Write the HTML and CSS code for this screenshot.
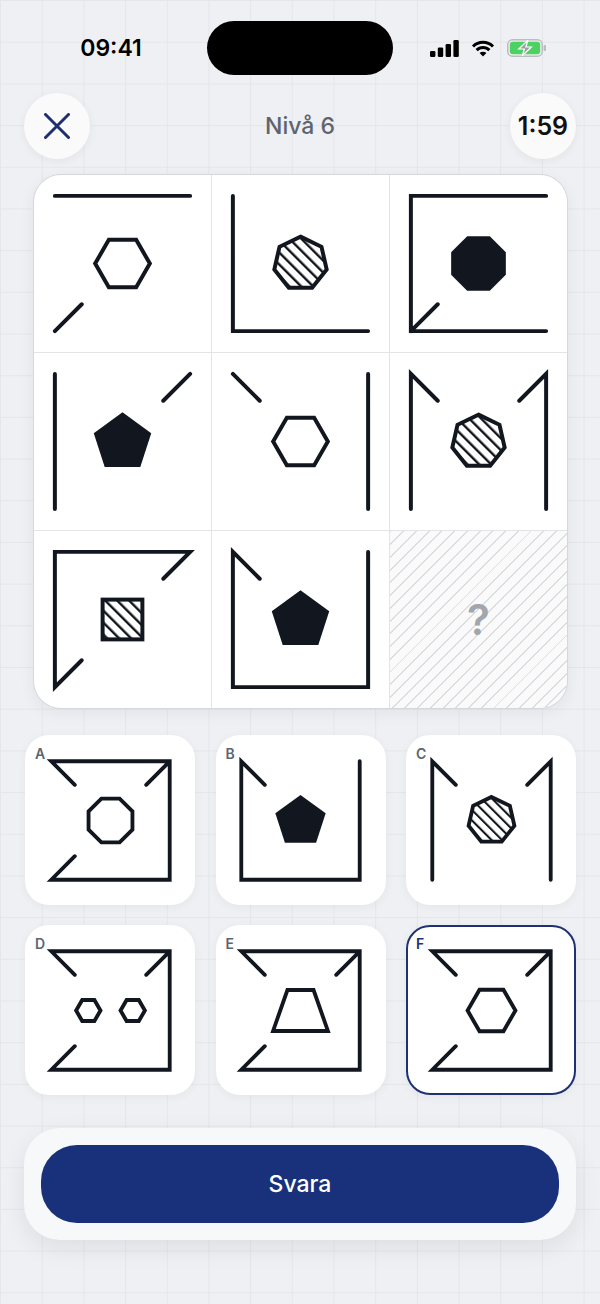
FILE: index.html
```html
<!DOCTYPE html>
<html lang="sv">
<head>
    <meta charset="UTF-8">
    <meta name="viewport" content="width=device-width, initial-scale=1.0">
    <title>Nivå 6</title>
    <link rel="stylesheet" href="styles.css">
</head>
<body>

    <svg class="defs" width="0" height="0">
        <defs>
            <pattern id="hatch" patternUnits="userSpaceOnUse" width="8.5" height="8.5" patternTransform="rotate(-45)">
                <rect x="0" y="0" width="2.4" height="8.5" fill="#12171f"/>
            </pattern>
        </defs>
    </svg>

    <div class="screen">

        <div class="status-bar">
            <div class="clock">09:41</div>
            <div class="island"></div>
            <div class="status-icons">
                <svg width="29" height="17" viewBox="0 0 29 17">
                    <rect x="0" y="11" width="5.4" height="6" rx="1.3" fill="#000"/>
                    <rect x="7.8" y="7.5" width="5.4" height="9.5" rx="1.3" fill="#000"/>
                    <rect x="15.6" y="4" width="5.4" height="13" rx="1.3" fill="#000"/>
                    <rect x="23.4" y="0" width="5.4" height="17" rx="1.3" fill="#000"/>
                </svg>
                <svg width="24" height="17" viewBox="0 0 24 17">
                    <path d="M12 16.5 L8.6 13.1 A4.8 4.8 0 0 1 15.4 13.1 Z" fill="#000"/>
                    <path d="M5.6 10.1 A9 9 0 0 1 18.4 10.1" fill="none" stroke="#000" stroke-width="3"/>
                    <path d="M2 6.5 A14 14 0 0 1 22 6.5" fill="none" stroke="#000" stroke-width="3"/>
                </svg>
                <svg width="40" height="18" viewBox="0 0 40 18">
                    <rect x="0.75" y="0.75" width="34.5" height="16.5" rx="4.8" fill="none" stroke="#b9bcc1" stroke-width="1.5"/>
                    <rect x="2.8" y="2.8" width="30.4" height="12.4" rx="3" fill="#4cd263"/>
                    <rect x="36.6" y="6" width="2.4" height="6" rx="1.1" fill="#b9bcc1"/>
                    <polygon points="21,1.2 11.8,10 17.4,10 15.2,16.8 24.4,8 18.8,8" fill="#9a9ea3" stroke="#fff" stroke-width="1.2"/>
                </svg>
            </div>
        </div>

        <header class="top-bar">
            <button class="round-btn close-btn" aria-label="Stäng">
                <svg width="26" height="26" viewBox="0 0 26 26">
                    <path d="M1.5 1.5 L24.5 24.5 M24.5 1.5 L1.5 24.5" stroke="#1e2f6f" stroke-width="3" stroke-linecap="round"/>
                </svg>
            </button>
            <h1 class="level-title">Nivå 6</h1>
            <div class="round-btn timer">1:59</div>
        </header>

        <!-- 3x3 matrix -->
        <div class="puzzle">
            <div class="cell">
                <svg viewBox="0 0 178 178">
                    <path d="M21 21H157 M21 157L48 130"/>
                    <polygon points="116.5,89 102.75,112.8 75.25,112.8 61.5,89 75.25,65.2 102.75,65.2"/>
                </svg>
            </div>
            <div class="cell">
                <svg viewBox="0 0 178 178">
                    <path d="M21 21V157H157"/>
                    <polygon class="hatched" points="89,62 110.11,72.17 115.32,95.01 100.72,113.33 77.28,113.33 62.68,95.01 67.89,72.17"/>
                </svg>
            </div>
            <div class="cell">
                <svg viewBox="0 0 178 178">
                    <path d="M157 21H21V157H157 M21 157L48 130"/>
                    <polygon class="solid" points="116.5,77.6 116.5,100.4 100.4,116.5 77.6,116.5 61.5,100.4 61.5,77.6 77.6,61.5 100.4,61.5"/>
                </svg>
            </div>

            <div class="cell">
                <svg viewBox="0 0 178 178">
                    <path d="M21 21V157 M157 21L130 48"/>
                    <polygon class="solid" points="89,59.6 117.9,80.6 106.9,114.6 71.1,114.6 60.1,80.6"/>
                </svg>
            </div>
            <div class="cell">
                <svg viewBox="0 0 178 178">
                    <path d="M21 21L48 48 M157 21V157"/>
                    <polygon points="116.5,89 102.75,112.8 75.25,112.8 61.5,89 75.25,65.2 102.75,65.2"/>
                </svg>
            </div>
            <div class="cell">
                <svg viewBox="0 0 178 178">
                    <path d="M48 48L21 21V157 M130 48L157 21V157"/>
                    <polygon class="hatched" points="89,62 110.11,72.17 115.32,95.01 100.72,113.33 77.28,113.33 62.68,95.01 67.89,72.17"/>
                </svg>
            </div>

            <div class="cell">
                <svg viewBox="0 0 178 178">
                    <path d="M130 48L157 21H21V157L48 130"/>
                    <rect class="hatched" x="69" y="69" width="40" height="40"/>
                </svg>
            </div>
            <div class="cell">
                <svg viewBox="0 0 178 178">
                    <path d="M48 48L21 21V157H157V21"/>
                    <polygon class="solid" points="89,59.6 117.9,80.6 106.9,114.6 71.1,114.6 60.1,80.6"/>
                </svg>
            </div>
            <div class="cell cell-missing">
                <span>?</span>
            </div>
        </div>

        <!-- answer options -->
        <div class="options">
            <div class="option">
                <span class="option-label">A</span>
                <svg viewBox="0 0 178 178">
                    <path d="M48 48L21 21H157V157H21L48 130 M130 48L157 21"/>
                    <polygon points="114.2,78.55 114.2,99.45 99.45,114.2 78.55,114.2 63.8,99.45 63.8,78.55 78.55,63.8 99.45,63.8"/>
                </svg>
            </div>
            <div class="option">
                <span class="option-label">B</span>
                <svg viewBox="0 0 178 178">
                    <path d="M48 48L21 21V157H157V21"/>
                    <polygon class="solid" points="89,59.6 117.9,80.6 106.9,114.6 71.1,114.6 60.1,80.6"/>
                </svg>
            </div>
            <div class="option">
                <span class="option-label">C</span>
                <svg viewBox="0 0 178 178">
                    <path d="M48 48L21 21V157 M130 48L157 21V157"/>
                    <polygon class="hatched" points="89,62 110.11,72.17 115.32,95.01 100.72,113.33 77.28,113.33 62.68,95.01 67.89,72.17"/>
                </svg>
            </div>
            <div class="option">
                <span class="option-label">D</span>
                <svg viewBox="0 0 178 178">
                    <path d="M48 48L21 21H157V157H21L48 130 M130 48L157 21"/>
                    <polygon points="77.5,89 70.5,101.1 56.5,101.1 49.5,89 56.5,76.9 70.5,76.9"/>
                    <polygon points="128.5,89 121.5,101.1 107.5,101.1 100.5,89 107.5,76.9 121.5,76.9"/>
                </svg>
            </div>
            <div class="option">
                <span class="option-label">E</span>
                <svg viewBox="0 0 178 178">
                    <path d="M48 48L21 21H157V157H21L48 130 M130 48L157 21"/>
                    <polygon points="74,65.5 104,65.5 120.5,112.5 57.5,112.5"/>
                </svg>
            </div>
            <div class="option selected">
                <span class="option-label">F</span>
                <svg viewBox="0 0 178 178">
                    <path d="M48 48L21 21H157V157H21L48 130 M130 48L157 21"/>
                    <polygon points="116.5,89 102.75,112.8 75.25,112.8 61.5,89 75.25,65.2 102.75,65.2"/>
                </svg>
            </div>
        </div>

        <div class="answer-bar">
            <button class="btn-answer">Svara</button>
        </div>

    </div>

</body>
</html>
```

FILE: styles.css
```css
body {
    margin: 0;
    width: 600px;
    height: 1304px;
    font-family: Inter, "Noto Sans", sans-serif;
    color: #111;
    background-color: #eff0f3;
    background-image:
        linear-gradient(#e4e6ea 1px, transparent 1px),
        linear-gradient(90deg, #e4e6ea 1px, transparent 1px);
    background-size: 41.7px 41.7px;
    overflow: hidden;
}
.defs {
    display: block;
    width: 0;
    height: 0;
}
.screen {
    display: flex;
    flex-direction: column;
}

/* status bar */
.status-bar {
    display: grid;
    grid-template-columns: 1fr 186px 1fr;
    align-items: center;
    padding-top: 21px;
    height: 54px;
}
.clock {
    text-align: center;
    padding-left: 15px;
    font-size: 23px;
    font-weight: 600;
    color: #000;
}
.island {
    height: 54px;
    background: #000;
    border-radius: 27px;
}
.status-icons {
    display: flex;
    justify-content: center;
    align-items: center;
    gap: 12px;
    padding-right: 16px;
}
.status-icons svg {
    display: block;
}

/* header */
.top-bar {
    display: flex;
    align-items: center;
    justify-content: space-between;
    padding: 0 24px;
    margin-top: 18px;
    height: 66px;
}
.round-btn {
    width: 66px;
    height: 66px;
    border-radius: 50%;
    border: none;
    padding: 0;
    background: #fafafb;
    box-shadow: 0 2px 10px rgba(30, 40, 60, 0.06);
    display: flex;
    align-items: center;
    justify-content: center;
}
.level-title {
    margin: 0;
    font-size: 23px;
    font-weight: 500;
    color: #5d6470;
}
.timer {
    font-size: 25px;
    font-weight: 600;
    color: #111;
}

/* matrix */
.puzzle {
    margin: 15px 0 0 33px;
    width: 535px;
    height: 535px;
    box-sizing: border-box;
    border: 1px solid #d5d7dc;
    border-radius: 28px;
    overflow: hidden;
    background: #e3e4e8;
    display: grid;
    grid-template-columns: repeat(3, 1fr);
    grid-template-rows: repeat(3, 1fr);
    gap: 1px;
    box-shadow: 0 4px 16px rgba(20, 30, 50, 0.06);
}
.cell {
    background: #fff;
}
.cell svg,
.option svg {
    display: block;
    fill: none;
    stroke: #12171f;
    stroke-width: 4;
    stroke-linecap: round;
    stroke-linejoin: miter;
}
.cell svg {
    width: 100%;
    height: 100%;
}
.solid {
    fill: #12171f;
    stroke: none;
}
.hatched {
    fill: url(#hatch);
}
.cell-missing {
    display: flex;
    align-items: center;
    justify-content: center;
    background-color: #fafafa;
    background-image: repeating-linear-gradient(135deg, #dcdde1 0 1.4px, transparent 1.4px 9px);
}
.cell-missing span {
    font-size: 42px;
    font-weight: 600;
    color: #a2a6ad;
}

/* options */
.options {
    margin: 26px 0 0 25px;
    width: 551px;
    display: grid;
    grid-template-columns: repeat(3, 170px);
    grid-template-rows: repeat(2, 170px);
    column-gap: 20.5px;
    row-gap: 20px;
}
.option {
    position: relative;
    box-sizing: border-box;
    background: #fff;
    border: 2.5px solid transparent;
    border-radius: 24px;
    display: flex;
    align-items: center;
    justify-content: center;
    box-shadow: 0 2px 10px rgba(20, 30, 50, 0.05);
}
.option svg {
    width: 155px;
    height: 155px;
    stroke-width: 4.4;
}
.option.selected {
    border-color: #1e3273;
}
.option-label {
    position: absolute;
    top: 10px;
    left: 8px;
    font-size: 14px;
    font-weight: 600;
    line-height: 1;
    color: #5c6470;
}
.option.selected .option-label {
    color: #1e3273;
}

/* bottom button */
.answer-bar {
    margin: 33px 24px 0;
    padding: 17px;
    background: #f7f8fa;
    border-radius: 36px;
    box-shadow: 0 8px 24px rgba(20, 30, 50, 0.08);
}
.btn-answer {
    display: block;
    width: 100%;
    height: 78px;
    border: none;
    border-radius: 36px;
    background: #18317a;
    color: #fff;
    font-family: inherit;
    font-size: 23px;
    font-weight: 500;
    cursor: pointer;
}
```
